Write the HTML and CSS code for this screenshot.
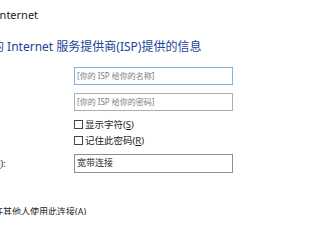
FILE: index.html
```html
<!DOCTYPE html>
<html lang="zh-CN">
<head>
<meta charset="utf-8">
<title>连接到 Internet</title>
<link rel="stylesheet" href="styles.css">
</head>
<body>
<div class="page">
  <div class="title">连接到 Internet</div>
  <h1 class="heading">键入你的 Internet 服务提供商(ISP)提供的信息</h1>
  <div class="form">
    <div class="label"></div>
    <div class="field focus"><span class="ph">[你的 ISP 给你的名称]</span></div>

    <div class="label"></div>
    <div class="field"><span class="ph">[你的 ISP 给你的密码]</span></div>

    <div class="label"></div>
    <div class="checks">
      <label class="check"><span class="box"></span><span>显示字符(<u>S</u>)</span></label>
      <label class="check"><span class="box"></span><span>记住此密码(<u>R</u>)</span></label>
    </div>

    <div class="label name">连接名称(<u>N</u>):</div>
    <div class="field plain"><span class="val">宽带连接</span></div>
  </div>
  <div class="allow"><span class="box"></span><span>允许其他人使用此连接(<u>A</u>)</span></div>
</div>
</body>
</html>
```

FILE: styles.css
```css
* { box-sizing: border-box; }
html, body { margin: 0; padding: 0; background: #ffffff; overflow: hidden; }
body {
  font-family: "Noto Sans", "Noto Sans CJK SC", sans-serif;
  color: #1e1e1e;
  width: 284px;
  height: 215px;
}
.page { width: 284px; }

.title {
  height: 30px;
  line-height: 30px;
  font-size: 11px;
  margin-left: -40px;
  white-space: nowrap;
  color: #222;
}

.heading {
  margin: 10px 0 0 -44px;
  font-size: 12px;
  line-height: 14px;
  height: 14px;
  font-weight: normal;
  color: #21439a;
  white-space: nowrap;
}

.form {
  margin-top: 13px;
  display: grid;
  grid-template-columns: 74px 159px;
  row-gap: 8px;
  align-items: center;
}

.label {
  font-size: 9px;
  white-space: nowrap;
}
.label.name { margin-left: -45px; }

.field {
  height: 18px;
  border: 1px solid #adadad;
  padding: 0 2px;
  font-size: 8px;
  line-height: 16px;
  white-space: nowrap;
  overflow: hidden;
}
.field.focus { border-color: #7fb3dc; }
.field.plain { border-color: #8f8f8f; height: 19px; }
.ph { color: #7d7d7d; }
.val { color: #1e1e1e; font-size: 9px; }

.checks {
  display: flex;
  flex-direction: column;
  margin-top: -3px;
  margin-bottom: -2px;
}
.check {
  display: flex;
  align-items: center;
  height: 16px;
  font-size: 9.5px;
  gap: 2px;
}
.box {
  width: 9px;
  height: 9px;
  border: 1px solid #444;
  background: #fff;
  flex: none;
}
u { text-decoration: underline; }

.allow {
  margin: 32px 0 0 -26px;
  display: flex;
  align-items: center;
  gap: 2px;
  font-size: 9px;
  line-height: 14px;
  white-space: nowrap;
}
```
